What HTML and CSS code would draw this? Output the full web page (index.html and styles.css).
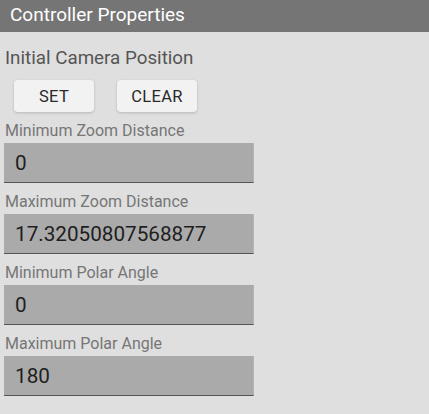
FILE: index.html
```html
<!DOCTYPE html>
<html>
<head>
<meta charset="utf-8">
<link rel="stylesheet" href="styles.css">
</head>
<body>
<div class="panel">
  <div class="header">Controller Properties</div>
  <div class="content">
    <div class="section-title">Initial Camera Position</div>
    <div class="buttons">
      <button class="btn">SET</button>
      <button class="btn">CLEAR</button>
    </div>
    <div class="field">
      <label class="label">Minimum Zoom Distance</label>
      <div class="input">0</div>
    </div>
    <div class="field">
      <label class="label">Maximum Zoom Distance</label>
      <div class="input">17.32050807568877</div>
    </div>
    <div class="field">
      <label class="label">Minimum Polar Angle</label>
      <div class="input">0</div>
    </div>
    <div class="field">
      <label class="label">Maximum Polar Angle</label>
      <div class="input">180</div>
    </div>
  </div>
</div>
</body>
</html>
```

FILE: styles.css
```css
html, body {
  margin: 0;
  padding: 0;
  background: #dfdfdf;
  font-family: Roboto, "Liberation Sans", sans-serif;
}
.panel {
  width: 429px;
  height: 414px;
  background: #dfdfdf;
}
.header {
  height: 32px;
  background: #757575;
  color: #ffffff;
  font-size: 19px;
  line-height: 30px;
  padding-left: 10px;
  box-sizing: border-box;
}
.content {
  padding: 0 0 0 4px;
}
.section-title {
  margin-top: 16px;
  padding-left: 1px;
  font-size: 18.8px;
  line-height: 20px;
  color: #555555;
}
.buttons {
  display: flex;
  gap: 23px;
  margin-top: 12px;
  padding-left: 10px;
}
.btn {
  width: 80px;
  height: 32px;
  border: none;
  border-radius: 4px;
  background: #f2f2f2;
  color: #2a2a2a;
  font-family: Roboto, "Liberation Sans", sans-serif;
  font-size: 16.5px;
  letter-spacing: 0.3px;
  box-shadow: 0 1px 3px rgba(0,0,0,0.18);
  padding: 0;
}
.field {
  margin-top: 10px;
}
.label {
  display: block;
  padding-left: 1px;
  font-size: 16px;
  line-height: 18px;
  color: #767676;
}
.input {
  width: 250px;
  height: 40px;
  margin-top: 3px;
  box-sizing: border-box;
  background: #aaaaaa;
  border-bottom: 1px solid #555555;
  border-right: 1px solid #b4b4b4;
  color: #1e1e1e;
  font-size: 20.7px;
  line-height: 40px;
  padding-left: 11px;
}
```
